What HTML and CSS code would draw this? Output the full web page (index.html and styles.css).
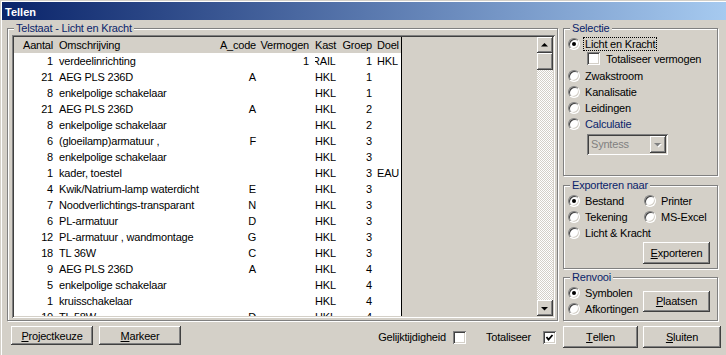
FILE: index.html
```html
<!DOCTYPE html>
<html lang="nl">
<head>
  <meta charset="UTF-8">
  <title>Tellen</title>
  <link rel="stylesheet" href="styles.css">
</head>
<body>

<div class="window">
  <div class="titlebar">Tellen</div>

  <div class="client">
    <div class="main">

      <!-- Telstaat -->
      <div class="group telstaat">
        <span class="legend">Telstaat - Licht en Kracht</span>
        <div class="list">
          <div class="grid">
            <div class="row head">
              <span class="r">Aantal</span><span class="l">Omschrijving</span><span class="r code">A_code</span><span class="r verm">Vermogen</span><span class="kast">Kast</span><span class="r groep">Groep</span><span class="doel">Doel</span>
            </div>
            <div class="row"><span class="r">1</span><span class="l">verdeelinrichting</span><span class="r code"></span><span class="r verm">1</span><span class="kast"><span class="cut">RAIL</span></span><span class="r groep">1</span><span class="doel">HKL</span></div>
            <div class="row"><span class="r">21</span><span class="l">AEG PLS 236D</span><span class="r code">A</span><span class="r verm"></span><span class="kast">HKL</span><span class="r groep">1</span><span class="doel"></span></div>
            <div class="row"><span class="r">8</span><span class="l">enkelpolige schakelaar</span><span class="r code"></span><span class="r verm"></span><span class="kast">HKL</span><span class="r groep">1</span><span class="doel"></span></div>
            <div class="row"><span class="r">21</span><span class="l">AEG PLS 236D</span><span class="r code">A</span><span class="r verm"></span><span class="kast">HKL</span><span class="r groep">2</span><span class="doel"></span></div>
            <div class="row"><span class="r">8</span><span class="l">enkelpolige schakelaar</span><span class="r code"></span><span class="r verm"></span><span class="kast">HKL</span><span class="r groep">2</span><span class="doel"></span></div>
            <div class="row"><span class="r">6</span><span class="l">(gloeilamp)armatuur ,</span><span class="r code">F</span><span class="r verm"></span><span class="kast">HKL</span><span class="r groep">3</span><span class="doel"></span></div>
            <div class="row"><span class="r">8</span><span class="l">enkelpolige schakelaar</span><span class="r code"></span><span class="r verm"></span><span class="kast">HKL</span><span class="r groep">3</span><span class="doel"></span></div>
            <div class="row"><span class="r">1</span><span class="l">kader, toestel</span><span class="r code"></span><span class="r verm"></span><span class="kast">HKL</span><span class="r groep">3</span><span class="doel">EAU</span></div>
            <div class="row"><span class="r">4</span><span class="l">Kwik/Natrium-lamp waterdicht</span><span class="r code">E</span><span class="r verm"></span><span class="kast">HKL</span><span class="r groep">3</span><span class="doel"></span></div>
            <div class="row"><span class="r">7</span><span class="l">Noodverlichtings-transparant</span><span class="r code">N</span><span class="r verm"></span><span class="kast">HKL</span><span class="r groep">3</span><span class="doel"></span></div>
            <div class="row"><span class="r">6</span><span class="l">PL-armatuur</span><span class="r code">D</span><span class="r verm"></span><span class="kast">HKL</span><span class="r groep">3</span><span class="doel"></span></div>
            <div class="row"><span class="r">12</span><span class="l">PL-armatuur , wandmontage</span><span class="r code">G</span><span class="r verm"></span><span class="kast">HKL</span><span class="r groep">3</span><span class="doel"></span></div>
            <div class="row"><span class="r">18</span><span class="l">TL 36W</span><span class="r code">C</span><span class="r verm"></span><span class="kast">HKL</span><span class="r groep">3</span><span class="doel"></span></div>
            <div class="row"><span class="r">9</span><span class="l">AEG PLS 236D</span><span class="r code">A</span><span class="r verm"></span><span class="kast">HKL</span><span class="r groep">4</span><span class="doel"></span></div>
            <div class="row"><span class="r">5</span><span class="l">enkelpolige schakelaar</span><span class="r code"></span><span class="r verm"></span><span class="kast">HKL</span><span class="r groep">4</span><span class="doel"></span></div>
            <div class="row"><span class="r">1</span><span class="l">kruisschakelaar</span><span class="r code"></span><span class="r verm"></span><span class="kast">HKL</span><span class="r groep">4</span><span class="doel"></span></div>
            <div class="row"><span class="r">10</span><span class="l">TL 58W</span><span class="r code">D</span><span class="r verm"></span><span class="kast">HKL</span><span class="r groep">4</span><span class="doel"></span></div>
          </div>
          <div class="list-rest"></div>
          <div class="scrollbar">
            <div class="sb-btn"><svg width="16" height="16"><polygon points="4,9.5 11,9.5 7.5,6" fill="#000"/></svg></div>
            <div class="thumb"></div>
            <div class="sb-track"></div>
            <div class="sb-btn"><svg width="16" height="16"><polygon points="4,7 11,7 7.5,10.5" fill="#000"/></svg></div>
          </div>
        </div>
      </div>

      <!-- Right column -->
      <div class="side">
        <div class="group selectie">
          <span class="legend">Selectie</span>
          <div class="radio"><span class="rb on"></span><span class="focus">Licht en Kracht</span></div>
          <div class="check"><span class="cb"></span>Totaliseer vermogen</div>
          <div class="radio gap-top"><span class="rb"></span>Zwakstroom</div>
          <div class="radio"><span class="rb"></span>Kanalisatie</div>
          <div class="radio"><span class="rb"></span>Leidingen</div>
          <div class="radio"><span class="rb"></span><span class="navy">Calculatie</span></div>
          <div class="combo">
            <span class="combo-text">Syntess</span>
            <span class="combo-btn"><svg width="16" height="17"><polygon points="5,8 12,8 8.5,11.5" fill="#fff"/><polygon points="4,7 11,7 7.5,10.5" fill="#808080"/></svg></span>
          </div>
        </div>

        <div class="group exporteren">
          <span class="legend">Exporteren naar</span>
          <div class="radio-grid">
            <div class="radio"><span class="rb on"></span>Bestand</div>
            <div class="radio"><span class="rb"></span>Printer</div>
            <div class="radio"><span class="rb"></span>Tekening</div>
            <div class="radio"><span class="rb"></span>MS-Excel</div>
            <div class="radio"><span class="rb"></span>Licht &amp; Kracht</div>
          </div>
          <div class="btn-line">
            <div class="btn small-btn"><u>E</u>xporteren</div>
          </div>
        </div>

        <div class="group renvooi">
          <span class="legend">Renvooi</span>
          <div class="renvooi-body">
            <div>
              <div class="radio"><span class="rb on"></span>Symbolen</div>
              <div class="radio"><span class="rb"></span>Afkortingen</div>
            </div>
            <div class="btn small-btn plaatsen"><u>P</u>laatsen</div>
          </div>
        </div>
      </div>
    </div>

    <div class="footer">
      <div class="footer-left">
        <div class="btn low-btn"><u>P</u>rojectkeuze</div>
        <div class="btn low-btn"><u>M</u>arkeer</div>
        <div class="footer-check first">Gelijktijdigheid <span class="cb"></span></div>
        <div class="footer-check">Totaliseer <span class="cb"><svg width="13" height="13"><polyline points="3.5,6 5.5,8.5 9.5,4" fill="none" stroke="#000" stroke-width="1.8"/></svg></span></div>
      </div>
      <div class="btn tellen"><u>T</u>ellen</div>
      <div class="btn sluiten"><u>S</u>luiten</div>
    </div>
  </div>
</div>

</body>
</html>
```

FILE: styles.css
```css
/* Basic reset */
body {
  margin: 0;
  background: #d4d0c8;
  font-family: "Liberation Sans", Arial, sans-serif;
  font-size: 11px;
  letter-spacing: -0.2px;
  color: #000;
}

*, *::before, *::after {
  box-sizing: border-box;
}

/* Window frame */
.window {
  width: 726px;
  height: 355px;
  padding: 2px 0 0 2px;
  overflow: hidden;
  box-shadow: inset 1px 1px 0 #d4d0c8, inset 2px 2px 0 #fff;
}

.titlebar {
  height: 18px;
  padding: 2px 0 0 3px;
  line-height: 16px;
  font-weight: bold;
  letter-spacing: 0;
  color: #fff;
  background: linear-gradient(to right, #0a246a, #a6caf0);
}

.client {
  padding: 8px 0 0 5px;
}

.main {
  display: flex;
  gap: 5px;
}

/* Group boxes */
.group {
  position: relative;
  border: 1px solid #808080;
  box-shadow: inset 1px 1px 0 #fff, 1px 1px 0 #fff;
}

.legend {
  position: absolute;
  top: -7px;
  left: 6px;
  padding: 0 2px;
  line-height: 13px;
  background: #d4d0c8;
  color: #0a246a;
  white-space: nowrap;
}

.telstaat {
  width: 551px;
  height: 293px;
  padding: 6px 2px 2px 4px;
}

/* List */
.list {
  display: flex;
  height: 283px;
  padding: 2px;
  overflow: hidden;
  box-shadow: inset 1px 1px 0 #808080, inset -1px -1px 0 #fff, inset 2px 2px 0 #404040, inset -2px -2px 0 #d4d0c8;
}

.grid {
  width: 388px;
  flex: none;
  background: #fff;
  border-right: 1px solid #000;
  overflow: hidden;
}

.row {
  display: grid;
  grid-template-columns: 43px 143px 59px 52px 29px 34px 27px;
  height: 16px;
  line-height: 16px;
  white-space: nowrap;
}

.row.head {
  background: #d4d0c8;
}

.row span {
  overflow: hidden;
}

.row .r {
  text-align: right;
  padding-right: 4px;
}

.row .l {
  padding-left: 2px;
}

.row .code {
  padding-right: 3px;
}

.row .verm,
.row .groep {
  padding-right: 2px;
}

.row .kast {
  padding-left: 4px;
}

.row .doel {
  padding-left: 3px;
}

.cut {
  display: inline-block;
  margin-left: -3px;
  clip-path: inset(0 0 0 3px);
}

.list-rest {
  flex: 1;
}

/* Scrollbar */
.scrollbar {
  width: 16px;
  flex: none;
  display: flex;
  flex-direction: column;
  background: repeating-conic-gradient(#fff 0 25%, #d4d0c8 0 50%) 0 0 / 2px 2px;
}

.sb-btn, .thumb, .btn, .combo-btn {
  background: #d4d0c8;
  box-shadow: inset -1px -1px 0 #404040, inset 1px 1px 0 #fff, inset -2px -2px 0 #808080, inset 2px 2px 0 #d4d0c8;
}

.sb-btn {
  height: 16px;
  flex: none;
}

.sb-btn svg, .combo-btn svg {
  display: block;
}

.thumb {
  height: 17px;
  flex: none;
}

.sb-track {
  flex: 1;
}

/* Right column */
.side {
  width: 155px;
  display: flex;
  flex-direction: column;
}

.selectie {
  height: 148px;
  padding: 7px 0 0 4px;
}

.exporteren {
  height: 84px;
  margin-top: 9px;
  padding: 7px 7px 4px 4px;
}

.renvooi {
  height: 44px;
  margin-top: 8px;
  padding: 7px 7px 3px 4px;
}

.radio {
  display: flex;
  align-items: center;
  gap: 5px;
  height: 16px;
  white-space: nowrap;
}

.gap-top {
  margin-top: 3px;
}

.rb {
  position: relative;
  flex: none;
  width: 12px;
  height: 12px;
  border-radius: 50%;
  background: #fff;
  border: 1px solid;
  border-color: #808080 #fff #fff #808080;
  box-shadow: inset 1px 1px 0 #404040, inset -1px -1px 0 #d4d0c8;
}

.rb.on::after {
  content: "";
  position: absolute;
  left: 3px;
  top: 3px;
  width: 4px;
  height: 4px;
  border-radius: 50%;
  background: #000;
}

.focus {
  outline: 1px dotted #000;
  padding: 0 1px;
  margin-left: -1px;
  line-height: 12px;
}

.navy {
  color: #0a246a;
}

.check {
  display: flex;
  align-items: center;
  gap: 6px;
  height: 13px;
  margin-left: 19px;
  white-space: nowrap;
}

.cb {
  flex: none;
  width: 13px;
  height: 13px;
  background: #fff;
  box-shadow: inset 1px 1px 0 #808080, inset -1px -1px 0 #fff, inset 2px 2px 0 #404040, inset -2px -2px 0 #d4d0c8;
}

.cb svg {
  display: block;
}

/* Disabled combobox */
.combo {
  display: flex;
  width: 81px;
  height: 21px;
  margin: 2px 0 0 19px;
  padding: 2px;
  background: #d4d0c8;
  color: #808080;
  box-shadow: inset 1px 1px 0 #808080, inset -1px -1px 0 #fff, inset 2px 2px 0 #404040, inset -2px -2px 0 #d4d0c8;
}

.combo-text {
  flex: 1;
  padding-left: 2px;
  line-height: 17px;
}

.combo-btn {
  width: 16px;
  height: 17px;
}

.radio-grid {
  display: grid;
  grid-template-columns: 76px 1fr;
}

.btn-line {
  display: flex;
  justify-content: flex-end;
  margin-top: 1px;
}

/* Buttons */
.btn {
  display: flex;
  align-items: center;
  justify-content: center;
  height: 22px;
  white-space: nowrap;
}

.small-btn {
  width: 67px;
}

.plaatsen {
  height: 21px;
  margin-left: auto;
}

.renvooi-body {
  display: flex;
  align-items: center;
}

/* Footer */
.footer {
  display: flex;
  gap: 5px;
  height: 22px;
  margin-top: 5px;
}

.footer-left {
  width: 551px;
  display: flex;
  align-items: center;
  gap: 6px;
  padding: 0 2px 0 4px;
}

.low-btn {
  width: 82px;
  height: 19px;
  align-self: flex-start;
}

.footer-check {
  display: flex;
  align-items: center;
  gap: 12px;
  margin-left: 14px;
}

.footer-check.first {
  gap: 7px;
  margin-left: auto;
}

.tellen {
  width: 75px;
}

.sluiten {
  width: 78px;
}
```
